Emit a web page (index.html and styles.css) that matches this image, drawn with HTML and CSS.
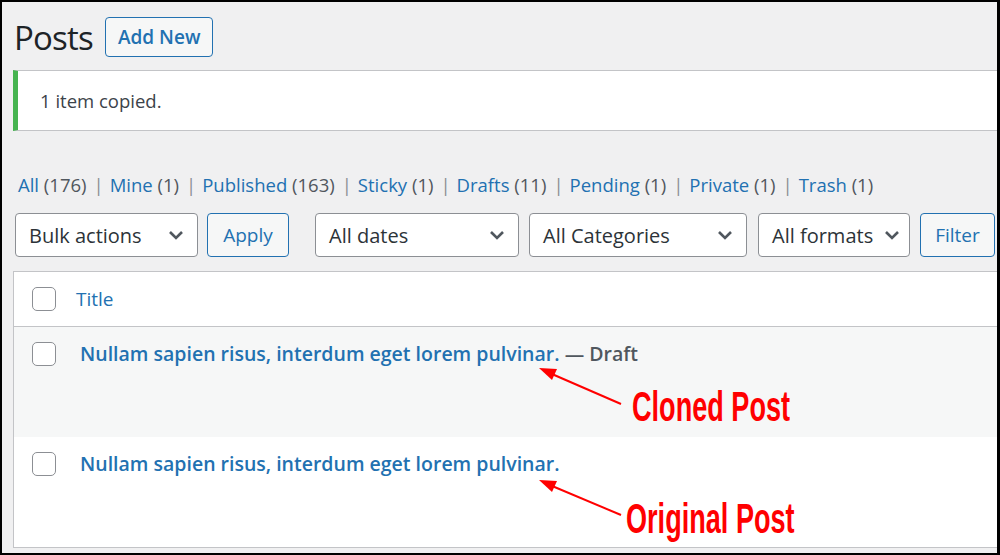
FILE: index.html
```html
<!DOCTYPE html>
<html lang="en">
<head>
    <meta charset="UTF-8">
    <meta name="viewport" content="width=device-width, initial-scale=1.0">
    <title>Posts</title>
    <link rel="stylesheet" href="styles.css">
</head>
<body>
    <div class="frame">
        <div class="wrap">
            <div class="judul">
                <h1>Posts</h1>
                <a href="#" class="tombol tombol-besar">Add New</a>
            </div>

            <div class="notice">1 item copied.</div>

            <ul class="status">
                <li><a href="#">All <span class="count">(176)</span></a><span class="sep">|</span></li>
                <li><a href="#">Mine <span class="count">(1)</span></a><span class="sep">|</span></li>
                <li><a href="#">Published <span class="count">(163)</span></a><span class="sep">|</span></li>
                <li><a href="#">Sticky <span class="count">(1)</span></a><span class="sep">|</span></li>
                <li><a href="#">Drafts <span class="count">(11)</span></a><span class="sep">|</span></li>
                <li><a href="#">Pending <span class="count">(1)</span></a><span class="sep">|</span></li>
                <li><a href="#">Private <span class="count">(1)</span></a><span class="sep">|</span></li>
                <li><a href="#">Trash <span class="count">(1)</span></a></li>
            </ul>

            <div class="filter">
                <div class="pilih w-bulk">Bulk actions <svg viewBox="0 0 20 20"><path d="M5 7.5l5 5 5-5"/></svg></div>
                <a href="#" class="tombol w-apply">Apply</a>
                <div class="pilih w-dates">All dates <svg viewBox="0 0 20 20"><path d="M5 7.5l5 5 5-5"/></svg></div>
                <div class="pilih w-cat">All Categories <svg viewBox="0 0 20 20"><path d="M5 7.5l5 5 5-5"/></svg></div>
                <div class="pilih w-format">All formats <svg viewBox="0 0 20 20"><path d="M5 7.5l5 5 5-5"/></svg></div>
                <a href="#" class="tombol w-filter">Filter</a>
            </div>

            <div class="tabel">
                <div class="baris kepala">
                    <span class="cek"></span>
                    <a href="#" class="kolom-judul">Title</a>
                </div>
                <div class="baris ganjil">
                    <span class="cek"></span>
                    <div class="isi"><a href="#">Nullam sapien risus, interdum eget lorem pulvinar.</a> <span class="status-post">— Draft</span></div>
                </div>
                <div class="baris">
                    <span class="cek"></span>
                    <div class="isi"><a href="#">Nullam sapien risus, interdum eget lorem pulvinar.</a></div>
                </div>
            </div>
        </div>

        <svg class="panah" width="1000" height="555" viewBox="0 0 1000 555">
            <line x1="621" y1="404" x2="545" y2="371" stroke="#ff0000" stroke-width="2"/>
            <path d="M539 368L557 369L552 380Z" fill="#ff0000"/>
            <line x1="621" y1="515" x2="545" y2="483" stroke="#ff0000" stroke-width="2"/>
            <path d="M539 480L557 481L552 492Z" fill="#ff0000"/>
        </svg>
        <div class="catatan catatan-1">Cloned Post</div>
        <div class="catatan catatan-2">Original Post</div>
    </div>
</body>
</html>
```

FILE: styles.css
```css
*{
    box-sizing: border-box;
}

body{
    margin: 0;
    font-family: "Open Sans", "Noto Sans", sans-serif;
}

.frame{
    position: relative;
    width: 1000px;
    height: 555px;
    border: 2px solid #000;
    border-right-width: 3px;
    background-color: #f0f0f1;
    overflow: hidden;
}

.wrap{
    padding: 14px 0 0 11px;
}

.judul{
    display: flex;
    align-items: center;
    gap: 12px;
    height: 42px;
}

h1{
    margin: 0 0 0 1px;
    font-size: 33px;
    font-weight: 400;
    color: #1d2327;
    letter-spacing: -0.8px;
}

.tombol{
    display: inline-flex;
    align-items: center;
    justify-content: center;
    height: 44px;
    border: 1px solid #2271b1;
    border-radius: 4px;
    background-color: #f6f7f7;
    color: #2271b1;
    font-size: 19px;
    text-decoration: none;
}

.tombol-besar{
    height: 40px;
    padding: 0 12px;
    font-weight: 600;
}

.notice{
    margin-top: 12px;
    height: 61px;
    display: flex;
    align-items: center;
    padding-left: 22px;
    background-color: #fff;
    border: 1px solid #c3c4c7;
    border-left: 5px solid #46b450;
    border-right: none;
    font-size: 18.5px;
    color: #3c434a;
}

.status{
    list-style: none;
    margin: 41px 0 0 5px;
    padding: 0;
    display: flex;
    font-size: 18.5px;
    color: #8c8f94;
}

.status a{
    color: #2271b1;
    text-decoration: none;
}

.sep{
    margin: 0 6px 0 7px;
}

.count{
    color: #50575e;
}

.filter{
    display: flex;
    margin: 16px 0 0 2px;
}

.pilih{
    display: flex;
    align-items: center;
    justify-content: space-between;
    height: 44px;
    padding: 0 9px 0 13px;
    background-color: #fff;
    border: 1px solid #8c8f94;
    border-radius: 4px;
    font-size: 20px;
    color: #2c3338;
}

.pilih svg{
    width: 24px;
    height: 24px;
    fill: none;
    stroke: #50575e;
    stroke-width: 2.2;
}

.w-bulk{
    width: 183px;
}

.w-apply{
    width: 82px;
    margin-left: 9px;
}

.w-dates{
    width: 204px;
    margin-left: 26px;
}

.w-cat{
    width: 218px;
    margin-left: 10px;
}

.w-format{
    width: 152px;
    margin-left: 11px;
    padding-right: 5px;
}

.w-filter{
    width: 75px;
    margin-left: 10px;
}

.tabel{
    margin-top: 14px;
    border: 1px solid #c3c4c7;
    border-right: none;
    background-color: #fff;
}

.baris{
    display: flex;
    align-items: flex-start;
    height: 110px;
    padding: 15px 0 0 18px;
}

.kepala{
    height: 55px;
    align-items: center;
    padding-top: 0;
    border-bottom: 1px solid #c3c4c7;
}

.ganjil{
    background-color: #f6f7f7;
}

.cek{
    width: 24px;
    height: 24px;
    border: 1px solid #8c8f94;
    border-radius: 5px;
    background-color: #fff;
    flex-shrink: 0;
}

.kolom-judul{
    margin-left: 20px;
    color: #2271b1;
    font-size: 19px;
    text-decoration: none;
}

.isi{
    margin-left: 24px;
    font-size: 19.5px;
    line-height: 24px;
    color: #50575e;
    font-weight: 600;
}

.isi a{
    color: #2271b1;
    text-decoration: none;
}

.panah{
    position: absolute;
    left: -2px;
    top: -2px;
}

.catatan{
    position: absolute;
    color: #ff0000;
    font-family: "Liberation Sans", Arial, sans-serif;
    font-weight: 700;
    font-size: 42px;
    line-height: 1;
    white-space: nowrap;
    transform: scaleX(0.645);
    transform-origin: left top;
}

.catatan-1{
    left: 630px;
    top: 384px;
}

.catatan-2{
    left: 624px;
    top: 496px;
}
```
